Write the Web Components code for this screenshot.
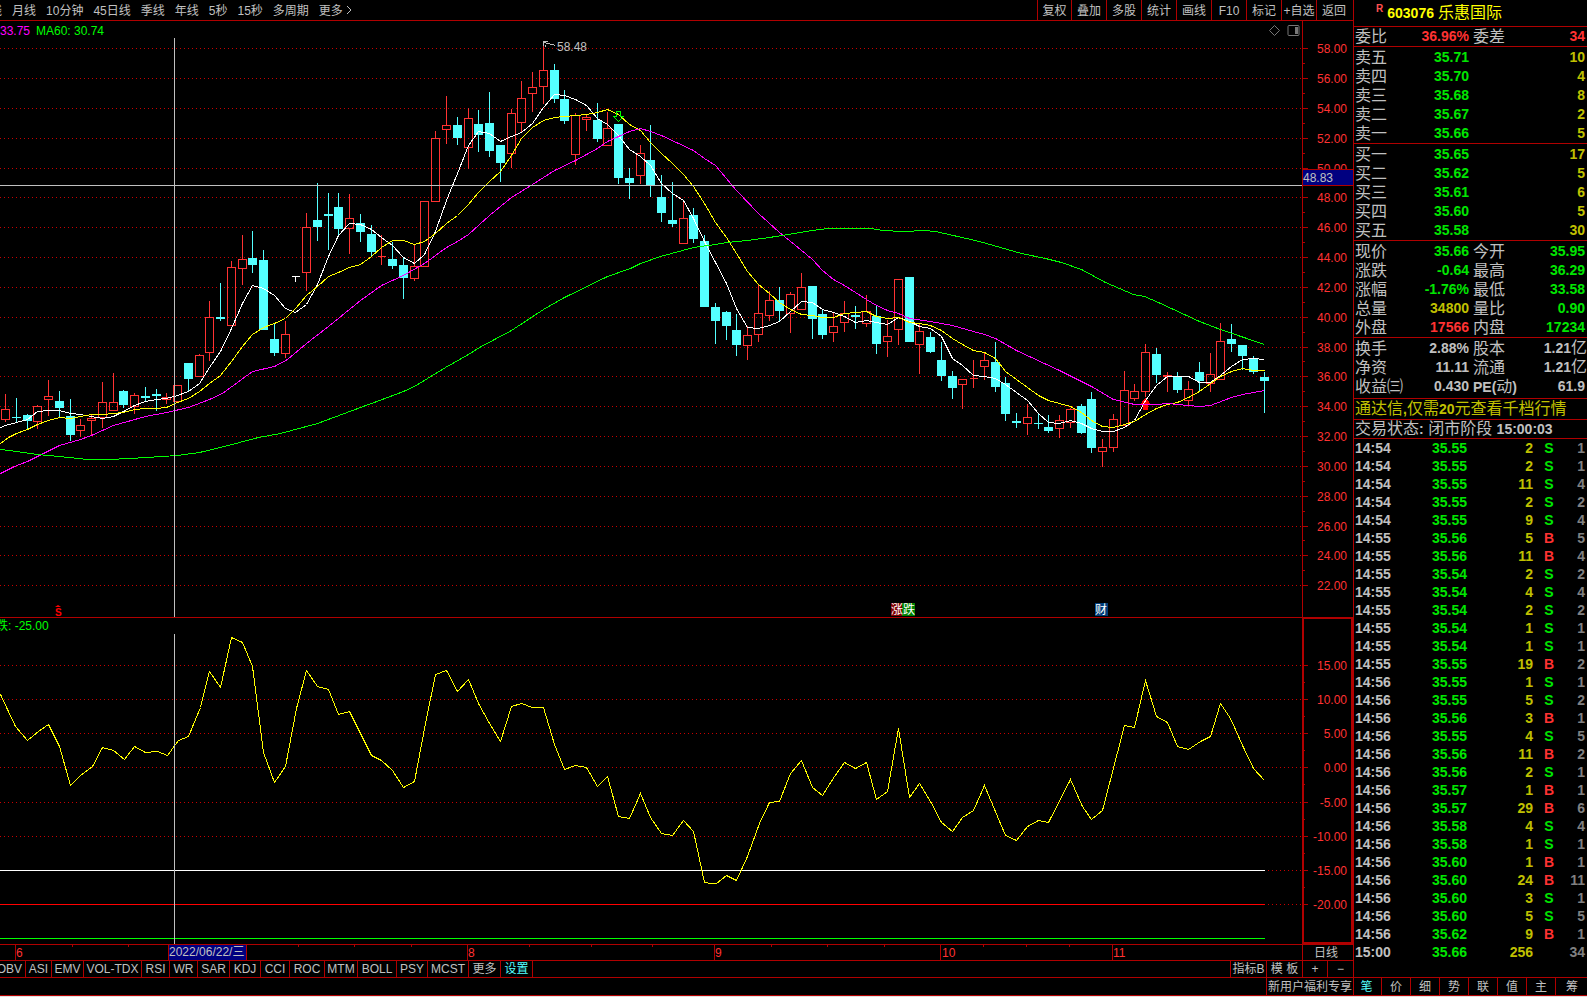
<!DOCTYPE html>
<html lang="zh-CN">
<head>
<meta charset="utf-8">
<title>603076 乐惠国际</title>
<style>
html, body { margin: 0; background: #000; }
body { font: 12px/16px "Liberation Sans", "Noto Sans CJK SC", sans-serif; color: #c0c0c0; overflow: hidden;
  --line: #b00000; --up: #ff3232; --down: #00e600; --vol: #c0c000; --txt: #c0c0c0; --cyan: #54ffff; }
</style>
</head>
<body>
<trade-screen>
  <period-bar slot="main"></period-bar>
  <price-chart slot="main"></price-chart>
  <swing-chart slot="main"></swing-chart>
  <time-axis slot="main"></time-axis>
  <indicator-tabs slot="main"></indicator-tabs>
  <promo-bar slot="main"><a href="#benefits">新用户福利专享</a></promo-bar>
  <quote-header slot="side" code="603076">乐惠国际</quote-header>
  <quote-grid slot="side" id="ratio"></quote-grid>
  <quote-grid slot="side" id="asks"></quote-grid>
  <quote-grid slot="side" id="bids"></quote-grid>
  <quote-grid slot="side" id="stats"></quote-grid>
  <quote-grid slot="side" id="basics"></quote-grid>
  <notice-line slot="side" kind="ad"></notice-line>
  <notice-line slot="side" kind="status"></notice-line>
  <tick-list slot="side"></tick-list>
  <side-tabs slot="side"></side-tabs>
</trade-screen>

<script>
const BUTTON = `button { all: unset; box-sizing: border-box; cursor: pointer; white-space: nowrap; text-align: center; }`;

function define(name, render) {
  customElements.define(name, class extends HTMLElement {
    connectedCallback() {
      if (this.shadowRoot) return;
      const t = document.createElement('template');
      t.innerHTML = render(this);
      this.attachShadow({ mode: 'open' }).append(t.content.cloneNode(true));
    }
  });
}

/* ---------- data ---------- */
// kind, x, high, body top, body bottom, low
const CANDLES = `R5,394,409,419,421 C16,398,417,418,423 C27,414,415,421,429 R37,405,406,421,428 R48,380,396,399,415
C59,391,401,408,417 C70,399,416,435,441 R80,419,425,430,436 R91,414,418,420,435 R102,382,402,417,427 R113,373,402,410,410
C123,390,391,405,408 R134,393,395,406,413 C145,387,396,398,402 C156,389,394,396,411 R166,393,397,399,403 R177,385,385,401,401
C188,363,363,379,391 R199,354,355,376,376 R209,301,317,352,360 C220,283,317,319,321 R231,261,267,325,325 R242,235,259,268,284
C252,231,258,265,273 C263,250,260,330,330 C274,323,339,353,356 R285,321,334,353,357 R306,213,227,272,290 C317,183,220,227,241
C328,193,214,216,250 C338,193,207,229,236 R349,194,218,228,253 C360,214,223,232,242 C371,225,234,252,256 R381,235,256,256,264
C392,242,259,266,269 C403,257,265,278,299 R414,245,266,278,280 R424,201,201,266,266 R435,131,138,201,201 R446,96,125,129,143
C457,117,125,138,145 R468,108,118,147,168 C478,110,124,135,152 C489,92,123,151,157 C500,145,145,163,182 R511,109,113,153,167
R521,81,98,122,132 R532,72,87,93,111 R543,41,70,86,103 C554,64,70,99,103 C564,90,99,121,124 R575,113,115,154,164
R586,115,117,119,130 C597,103,120,139,142 R607,112,128,145,145 C618,124,124,178,184 C629,168,178,183,199 R640,145,153,175,183
C650,125,160,185,197 C661,175,197,213,222 C672,182,220,224,227 R683,201,218,243,243 C693,208,215,239,243 C704,235,241,307,307
C715,303,307,321,344 C726,311,312,326,340 C736,314,330,345,356 R747,326,335,345,359 R758,285,313,334,341 R769,291,300,315,320
C779,287,300,311,322 R790,292,294,313,332 R801,273,287,309,309 C812,286,286,319,339 C822,309,314,335,339 R833,313,326,332,341
R844,301,313,322,331 C855,306,315,317,329 R866,295,311,323,326 C876,306,316,344,354 R887,320,336,341,356 R898,279,279,329,344
C909,277,277,342,342 R919,323,331,344,373 C930,332,337,352,353 C941,342,360,376,381 C952,371,376,388,399 R962,379,379,384,408
R973,360,378,378,387 R984,353,360,366,379 C995,342,362,387,392 C1005,377,383,414,421 C1016,413,421,423,428 R1027,404,417,423,434
C1038,413,423,424,429 C1048,415,427,431,433 R1059,415,420,428,437 R1070,408,409,422,427 C1081,404,406,433,434 C1091,392,399,448,453
R1102,439,447,451,466 R1113,414,419,447,451 R1124,371,390,425,425 R1134,384,391,398,400 R1145,344,352,391,396 C1156,348,354,375,383
R1167,372,375,376,391 C1177,372,376,390,393 R1188,381,389,400,404 C1199,362,372,381,392 R1210,353,374,383,391 R1220,323,341,379,379
C1231,324,339,344,352 C1242,345,345,356,370 C1253,356,359,372,374 C1264,372,377,381,413`;
const MA5 = `0,427 5,425 16,422 27,419 37,411 48,410 59,410 70,413 80,414 91,416 102,418 113,416 123,411 134,405 145,401 156,399 166,398 177,395 188,391 199,383 209,367 220,351 231,328 242,303 252,285 263,288 274,295 285,308 295,312 306,304 317,284 328,256 338,235 349,223 360,224 371,229 381,237 392,245 403,257 414,263 424,254 435,231 446,200 457,173 468,145 478,131 489,133 500,141 511,136 521,132 532,123 543,107 554,94 564,95 575,99 586,105 597,118 607,124 618,135 629,149 640,156 650,165 661,183 672,193 683,200 693,218 704,241 715,262 726,283 736,308 747,327 758,328 769,325 779,321 790,311 801,301 812,302 822,309 833,312 844,316 855,322 866,320 876,322 887,324 898,317 909,321 919,326 930,328 941,336 952,358 962,365 973,375 984,376 995,378 1005,384 1016,392 1027,400 1038,413 1048,422 1059,423 1070,420 1081,423 1091,428 1102,431 1113,431 1124,427 1134,420 1145,400 1156,385 1167,376 1188,376 1199,382 1210,382 1220,375 1231,366 1242,359 1253,358 1264,359`;
const MA10 = `0,443 8,437 16,433 27,429 37,424 48,420 59,417 70,418 80,416 91,414 102,414 113,413 123,412 134,409 145,408 156,408 166,407 177,402 188,398 199,391 209,383 220,375 231,361 242,346 252,334 263,327 274,323 285,318 295,308 306,295 317,286 328,276 338,272 349,267 360,264 371,256 381,247 392,240 403,240 414,244 424,241 435,233 446,223 457,215 468,204 478,192 489,181 500,171 511,155 521,138 532,127 543,120 554,117 564,116 575,115 586,114 597,112 607,109 618,114 629,124 640,130 650,142 661,153 672,163 683,174 693,186 704,203 715,222 726,237 736,253 747,271 758,284 769,293 779,302 790,309 801,314 812,315 822,317 833,317 844,313 855,312 866,311 876,316 887,318 898,317 909,322 919,323 930,325 941,330 952,338 962,344 973,350 984,352 995,358 1005,371 1016,379 1027,387 1038,395 1048,400 1059,403 1070,406 1081,412 1091,420 1102,426 1113,427 1124,424 1134,421 1145,414 1156,408 1167,404 1177,402 1188,397 1199,391 1210,383 1220,376 1231,371 1242,368 1253,370 1264,370`;
const MA20 = `0,473 14,466 27,461 59,445 80,439 91,435 113,425 145,416 166,412 188,407 209,399 222,393 252,371 274,366 287,359 306,343 328,326 360,300 381,285 403,275 424,263 435,255 446,247 457,241 468,234 489,215 511,197 532,184 554,170 575,160 597,148 607,141 618,136 629,131 640,128 650,131 661,135 693,150 704,158 715,165 736,190 758,213 779,232 800,249 812,259 822,270 833,279 844,285 855,292 866,299 876,305 887,310 898,313 909,318 930,321 952,325 973,331 984,334 995,338 1016,350 1059,370 1091,386 1113,399 1134,404 1156,404 1167,403 1188,405 1199,406 1210,405 1231,397 1242,394 1264,390`;
const MA60 = `0,449 16,451 37,454 59,456 87,459 107,459 130,458 177,455 199,452 220,447 258,437 280,433 317,423 360,407 371,403 403,391 414,386 445,367 468,354 479,347 511,330 543,309 564,297 607,276 630,268 640,263 660,256 693,247 715,244 726,242 747,240 769,237 800,232 811,230 828,228 871,228 882,230 903,231 924,230 935,231 944,233 979,241 1021,253 1045,258 1061,262 1081,269 1105,282 1133,294 1144,296 1158,302 1199,321 1220,329 1264,344`;
const SWING = `0,694 15,726 27,740 38,731 48,724 59,746 70,785 80,775 92,766 102,747 113,750 124,759 134,746 145,752 157,751 167,755 175,744 178,740 188,736 200,707 209,671 220,687 231,637 242,642 252,666 263,752 274,782 285,766 296,708 306,670 317,686 328,689 338,714 349,711 359,731 371,755 381,760 392,770 403,787 414,781 425,723 435,674 446,670 457,691 468,679 478,703 489,723 500,741 511,706 521,703 532,707 543,707 554,744 564,769 575,765 586,767 597,786 607,776 618,816 629,818 640,793 650,817 661,833 672,835 683,820 693,831 704,882 711,883 716,883 726,875 736,880 747,856 759,823 769,802 779,801 790,773 801,760 812,787 822,795 834,776 844,762 855,768 866,762 876,799 887,791 898,728 909,797 919,783 930,801 941,822 952,831 962,817 973,810 984,785 1005,835 1016,840 1027,826 1038,820 1048,822 1070,779 1082,806 1091,819 1102,810 1124,725 1134,727 1145,680 1156,716 1167,722 1177,746 1188,749 1200,741 1210,736 1220,703 1230,718 1243,747 1253,768 1264,780`;
const PRICE_LEVELS = [48,78,108,138,168,197,227,257,287,317,347,376,406,436,466,496,526,555,585].map((y, i) => [y, (58 - 2 * i).toFixed(2)]);
const SWING_LEVELS = [665,699,733,767,802,836,870,904].map((y, i) => [y, (15 - 5 * i).toFixed(2)]);

/* ---------- chart helpers ---------- */
const grid = levels => levels.map(([y]) => `<line class="grid" x1="-0.5" x2="100%" y1="${y}" y2="${y}"/>`).join('');
const ticks = levels => levels.map(([y], i) => {
  const next = levels[i + 1];
  const mid = next ? Math.floor((y + next[0]) / 2) : 0;
  return `<path d="M0 ${y}H5${next ? `M0 ${mid}H2` : ''}"/>`;
}).join('');
const scaleText = (levels, top) => levels.map(([y, t]) => `<text x="44" y="${y + 5 - top}" text-anchor="end">${t}</text>`).join('');
const candle = c => {
  const [x, hi, t, b, lo] = c.slice(1).split(',').map(Number);
  return c[0] === 'R'
    ? `<path class="up" d="M${x} ${hi - .5}V${t}M${x} ${b}V${lo}M${x - 4} ${t}H${x + 4}V${b}H${x - 4}Z"/>`
    : `<path class="dn" d="M${x} ${hi - .5}V${lo - .5}"/><rect class="dnb" x="${x - 4.5}" y="${t - .5}" width="9" height="${b - t}"/>`;
};
const PANE = `
  :host { display: grid; grid-template-columns: minmax(0, 1fr) 51px; border-bottom: 1px solid var(--line); }
  svg { display: block; width: 100%; height: 100%; overflow: hidden; font: 12px "Liberation Sans", "Noto Sans CJK SC", sans-serif; }
  .px { shape-rendering: crispEdges; fill: none; stroke-width: 1; }
  .grid { stroke: #c80000; stroke-dasharray: 1 3; }
  .cross { stroke: #c0c0c0; }
  .scale { box-sizing: border-box; border-left: 1px solid var(--line); fill: var(--up); }
  .scale .px { stroke: var(--line); }
  .yellow { stroke: #ff0; } .white { stroke: #fff; } .magenta { stroke: #f0f; } .green { stroke: #0f0; } .red { stroke: #f00; }`;

/* ---------- components ---------- */
define('trade-screen', () => `<style>
  :host { display: grid; grid-template-columns: minmax(0, 1fr) 234px; min-height: 100vh; box-sizing: border-box; border-bottom: 1px solid #e0e0e0; }
  main, aside { display: flex; flex-direction: column; min-width: 0; border-bottom: 1px solid var(--line); }
  aside { border-left: 1px solid var(--line); overflow: hidden; }
</style><main><slot name="main"></slot></main><aside><slot name="side"></slot></aside>`);

define('period-bar', () => `<style>${BUTTON}
  :host { display: flex; justify-content: space-between; height: 20px; line-height: 22px; border-bottom: 1px solid var(--line); overflow: hidden; }
  nav { display: flex; height: 20px; }
  .periods { gap: 10px; margin-left: -22px; }
  .tools button { width: 35px; border-left: 1px solid var(--line); }
  .tools button:first-child { width: 34px; }
  .tools button:last-child { width: 37px; padding-right: 2px; }
</style>
<nav class="periods" aria-label="周期">${['周线','月线','10分钟','45日线','季线','年线','5秒','15秒','多周期'].map(t => `<button>${t}</button>`).join('')}<button>更多<svg width="10" height="10" viewBox="0 0 10 10" fill="none" stroke="#c0c0c0"><path d="M4 1l4 4-4 4"/></svg></button></nav>
<nav class="tools" aria-label="工具">${['复权','叠加','多股','统计','画线','F10','标记','+自选','返回'].map(t => `<button>${t}</button>`).join('')}</nav>`);

define('price-chart', () => `<style>${PANE}
  :host { height: 596px; position: relative; }
  .up { stroke: var(--up); } .dn { stroke: var(--cyan); } .dnb { fill: var(--cyan); }
  .lbl { fill: #c0c0c0; }
  .tools { position: absolute; top: 3px; right: 53px; display: flex; gap: 6px; }
  .tools button { all: unset; width: 13px; height: 13px; cursor: pointer; }
</style>
<svg role="img" aria-label="K线图">
  <g class="px" transform="translate(0.5,-20.5)">
    ${grid(PRICE_LEVELS)}
    ${CANDLES.split(/\s+/).map(candle).join('')}
    <path class="white" d="M291 276H299M295 276V281"/>
    <path d="M1145 398l5 6h-3v5h-4v-5h-3z" fill="#f00" stroke="#f00"/>
    <polyline class="white" points="${MA5}"/>
    <polyline class="yellow" points="${MA10}"/>
    <polyline class="magenta" points="${MA20}"/>
    <polyline class="green" points="${MA60}"/>
    <path class="green" d="M616 111h4v5h3l-5 5l-5-5h3z"/>
    <path class="cross" d="M555 45L544 42M547 41H543V45M545 44v2"/>
    <line class="cross" x1="-1" x2="100%" y1="185" y2="185"/>
    <line class="cross" x1="174" x2="174" y1="37" y2="617"/>
  </g>
  <text x="0" y="14" fill="#f0f">33.75</text><text x="36" y="14" fill="#0f0">MA60: 30.74</text>
  <text class="lbl" x="557" y="30">58.48</text>
  <path d="M55 586l3-2 3 2z" fill="#f00"/><text x="55" y="595" fill="#f00" style="font-size:10px;font-weight:bold">S</text>
  <rect x="891" y="582" width="12" height="13" fill="#800000"/><rect x="902" y="582" width="13" height="13" fill="#008000"/>
  <text x="891" y="593" fill="#fff">涨跌</text>
  <rect x="1095" y="582" width="13" height="13" fill="#003c78"/><text x="1095" y="593" fill="#fff">财</text>
</svg>
<svg class="scale" role="img" aria-label="价格刻度">
  <g class="px" transform="translate(0,-20.5)">${ticks(PRICE_LEVELS)}</g>
  ${scaleText(PRICE_LEVELS, 21)}
  <rect x="0" y="148" width="50" height="17" fill="#b00000"/><rect x="0" y="149" width="50" height="15" fill="#000080"/>
  <text class="lbl" x="0" y="161">48.83</text>
</svg>
<div class="tools"><button aria-label="标注"><svg viewBox="0 0 13 13" fill="none" stroke="#777"><path d="M6.500 1.500l5 5-5 5-5-5z"/></svg></button>
<button aria-label="侧栏"><svg viewBox="0 0 13 13" fill="none" stroke="#777"><rect x="1" y="1.500" width="11" height="10" rx="1"/><rect x="8" y="3" width="3" height="7" fill="#777" stroke="none"/></svg></button></div>`);

define('swing-chart', () => `<style>${PANE}
  :host { height: 326px; }
  .scale { border-left: 0; }
</style>
<svg role="img" aria-label="涨跌指标">
  <g class="px" transform="translate(0.5,-617.5)">
    ${grid(SWING_LEVELS)}
    <path class="white" d="M-1 870H1264"/><path class="red" d="M-1 904H1264"/><path class="green" d="M-1 938H1264"/>
    <polyline class="yellow" points="${SWING}"/>
    <line class="cross" x1="174" x2="174" y1="633" y2="944"/>
  </g>
  <text x="-4" y="12" fill="#0f0">跌: -25.00</text>
</svg>
<svg class="scale" role="img" aria-label="指标刻度">
  <g class="px" transform="translate(1,-617.5)">${ticks(SWING_LEVELS)}</g>
  <rect class="px" x="1" y="0" width="49" height="325" style="stroke-width:2"/>
  ${scaleText(SWING_LEVELS, 618).replace(/x="44"/g, 'x="45"')}
</svg>`);

define('time-axis', () => `<style>
  :host { display: grid; grid-template-columns: minmax(0, 1fr) 51px; height: 15px; border-bottom: 1px solid var(--line); }
  svg { display: block; width: 100%; height: 15px; overflow: hidden; font: 12px "Liberation Sans", "Noto Sans CJK SC", sans-serif; fill: var(--up); }
  button { all: unset; box-sizing: border-box; border-left: 1px solid var(--line); text-align: center; line-height: 16px; padding-right: 4px; height: 15px; }
</style>
<svg role="img" aria-label="日期轴">
  <path shape-rendering="crispEdges" stroke="#b00000" d="M15.500 0v15M467.500 0v15M714.500 0v15M940.500 0v15M1112.500 0v15${[72,128,298,354,411,529,591,652,771,827,884,983,1026,1069].map(x => `M${x + .5} 0v2`).join('')}"/>
  <text x="16" y="12">6</text><text x="468" y="12">8</text><text x="715" y="12">9</text><text x="942" y="12">10</text><text x="1113" y="12">11</text>
  <rect x="168" y="0" width="79" height="15" fill="#b00000"/><rect x="169" y="0" width="77" height="15" fill="#000080"/>
  <text x="169" y="11" fill="#c0c0c0">2022/06/22/三</text>
</svg><button>日线</button>`);

define('indicator-tabs', () => {
  const tabs = [['OBV',26],['ASI',26],['EMV',32],['VOL-TDX',58],['RSI',28],['WR',28],['SAR',32],['KDJ',31],['CCI',29],['ROC',35],['MTM',33],['BOLL',39],['PSY',31],['MCST',41],['更多',32],['设置',32]];
  return `<style>${BUTTON}
  :host { display: flex; justify-content: space-between; height: 16px; line-height: 16px; border-bottom: 1px solid var(--line); overflow: hidden; }
  nav { display: flex; }
  .left button { border-right: 1px solid var(--line); }
  .left button:first-child { display: flex; justify-content: flex-end; padding-right: 3px; }
  .left button:last-child { color: var(--cyan); }
  .right button { border-left: 1px solid var(--line); }
</style>
<nav class="left" aria-label="指标">${tabs.map(([t, w]) => `<button style="width:${w}px">${t}</button>`).join('')}</nav>
<nav class="right">${[['指标B',36],['模 板',36],['+',25],['−',26]].map(([t, w]) => `<button style="width:${w}px">${t}</button>`).join('')}</nav>`;
});

define('promo-bar', () => `<style>
  :host { display: flex; justify-content: flex-end; height: 17px; line-height: 19px; overflow: hidden; }
  ::slotted(a) { color: inherit; text-decoration: none; border-left: 1px solid var(--line); padding: 0 1px; }
</style><slot></slot>`);

define('quote-header', el => `<style>
  :host { display: flex; gap: 4px; height: 26px; line-height: 26px; padding-left: 22px; border-bottom: 1px solid var(--line); color: #ff0; font-size: 16px; white-space: nowrap; }
  sup { font: bold 10px/18px "Liberation Sans", sans-serif; color: #ff5050; }
  b { font-size: 14px; }
</style><sup>R</sup><b>${el.getAttribute('code')}</b><slot></slot>`);

const BOOK = {
  ratio: [['委比','36.96%','up','委差','34','up']],
  asks: [['卖五','35.71',10],['卖四','35.70',4],['卖三','35.68',8],['卖二','35.67',2],['卖一','35.66',5]].map(r => [r[0], r[1], 'down', '', r[2], 'vol']),
  bids: [['买一','35.65',17],['买二','35.62',5],['买三','35.61',6],['买四','35.60',5],['买五','35.58',30]].map(r => [r[0], r[1], 'down', '', r[2], 'vol']),
  stats: [['现价','35.66','down','今开','35.95','down'],['涨跌','-0.64','down','最高','36.29','down'],['涨幅','-1.76%','down','最低','33.58','down'],['总量','34800','vol','量比','0.90','down'],['外盘','17566','up','内盘','17234','down']],
  basics: [['换手','2.88%','txt','股本','1.21<i>亿</i>','unit'],['净资','11.11','txt','流通','1.21<i>亿</i>','unit'],['收益㈢','0.430','txt','<b>PE(</b>动<b>)</b>','61.9','txt']]
};
define('quote-grid', el => `<style>
  :host { display: block; border-bottom: 1px solid var(--line); }
  :host(#asks), :host(#bids), :host(#stats) { padding-top: 1px; }
  :host(#basics) { padding: 1px 0 2px; }
  table { width: 100%; table-layout: fixed; border-collapse: collapse; }
  tr { height: 19px; }
  th, td { padding: 0; line-height: 19px; height: 19px; white-space: nowrap; }
  th { font-weight: normal; font-size: 16px; text-align: left; padding-left: 1px; }
  th + td + th { padding-left: 4px; }
  td { font-weight: bold; font-size: 14px; text-align: right; }
  td:last-child { padding-right: 2px; }
  td.unit:last-child { padding-right: 0; }
  b { font-size: 14px; line-height: 0; } i { font: normal 16px/0 "Noto Sans CJK SC", sans-serif; }
  .up { color: var(--up); } .down { color: var(--down); } .vol { color: var(--vol); }
</style><table><colgroup><col style="width:50px"><col style="width:65px"><col style="width:50px"><col></colgroup>
${BOOK[el.id].map(([a, b, c, d, e, f]) => `<tr><th scope="row">${a}</th><td class="${c}">${b}</td><th>${d}</th><td class="${f}">${e}</td></tr>`).join('')}</table>`);

define('notice-line', el => `<style>
  :host { display: block; height: 20px; line-height: 20px; padding-left: 1px; font-size: 16px; white-space: nowrap; border-bottom: 1px solid var(--line); }
  :host([kind=status]) { height: 18px; line-height: 18px; }
  a { color: var(--vol); text-decoration: none; } b { font-size: 14px; }
</style>${el.getAttribute('kind') === 'ad' ? '<a href="#level2">通达信<b>,</b>仅需<b>20</b>元查看千档行情</a>' : '交易状态<b>:</b> 闭市阶段 <b>15:00:03</b>'}`);

const TICKS = `14:54 35.55 2 S 1|14:54 35.55 2 S 1|14:54 35.55 11 S 4|14:54 35.55 2 S 2|14:54 35.55 9 S 4|14:55 35.56 5 B 5|14:55 35.56 11 B 4|14:55 35.54 2 S 2|14:55 35.54 4 S 4|14:55 35.54 2 S 2|14:55 35.54 1 S 1|14:55 35.54 1 S 1|14:55 35.55 19 B 2|14:56 35.55 1 S 1|14:56 35.55 5 S 2|14:56 35.56 3 B 1|14:56 35.55 4 S 5|14:56 35.56 11 B 2|14:56 35.56 2 S 1|14:56 35.57 1 B 1|14:56 35.57 29 B 6|14:56 35.58 4 S 4|14:56 35.58 1 S 1|14:56 35.60 1 B 1|14:56 35.60 24 B 11|14:56 35.60 3 S 1|14:56 35.60 5 S 5|14:56 35.62 9 B 1|15:00 35.66 256  34`;
define('tick-list', () => `<style>
  :host { display: block; flex: 1; }
  table { width: 100%; table-layout: fixed; border-collapse: collapse; font-weight: bold; font-size: 14px; }
  td { padding: 0; height: 18px; line-height: 18px; text-align: right; }
  td:nth-child(1) { text-align: left; padding-left: 1px; }
  td:nth-child(2) { color: var(--down); }
  td:nth-child(3) { color: var(--vol); }
  td:nth-child(4) { text-align: center; }
  td:nth-child(5) { color: #808080; padding-right: 2px; }
  td.S { color: var(--down); } td.B { color: var(--up); }
</style><table><colgroup><col style="width:48px"><col style="width:65px"><col style="width:66px"><col style="width:32px"><col></colgroup>
${TICKS.split('|').map(r => { const [a, b, c, d, e] = r.split(' '); return `<tr><td>${a}</td><td>${b}</td><td>${c}</td><td class="${d}">${d}</td><td>${e}</td></tr>`; }).join('')}</table>`);

define('side-tabs', () => `<style>${BUTTON}
  :host { display: flex; height: 17px; line-height: 19px; border-top: 1px solid var(--line); overflow: hidden; }
  button { flex: none; width: 29px; height: 17px; border-right: 1px solid var(--line); }
  button:first-of-type { width: 28px; padding-right: 2px; color: var(--cyan); }
  button:last-of-type { width: 32px; border-right: 0; }
</style>${['笔','价','细','势','联','值','主','筹'].map(t => `<button>${t}</button>`).join('')}`);
</script>
</body>
</html>
